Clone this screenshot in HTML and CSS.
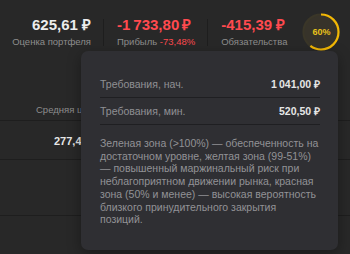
FILE: index.html
```html
<!DOCTYPE html>
<html>
<head>
  <link rel="stylesheet" href="styles.css">
</head>
<body>
  <div class="summary">
    <div class="stat stat-first">
      <div class="stat-value">625,61 ₽</div>
      <div class="stat-label">Оценка портфеля</div>
    </div>
    <div class="sep"></div>
    <div class="stat">
      <div class="stat-value neg">-1&thinsp;733,80&thinsp;₽</div>
      <div class="stat-label">Прибыль <span class="neg">-73,48%</span></div>
    </div>
    <div class="sep"></div>
    <div class="stat">
      <div class="stat-value neg">-415,39 ₽</div>
      <div class="stat-label">Обязательства</div>
    </div>
    <div class="gauge">
      <svg width="38" height="38" viewBox="0 0 38 38">
        <circle cx="19" cy="19" r="17.5" fill="#37332a" />
        <circle cx="19" cy="19" r="17.5" fill="none" stroke="#3a3628" stroke-width="2.2" />
        <circle cx="19" cy="19" r="17.5" fill="none" stroke="#f2b705" stroke-width="2.2"
          stroke-dasharray="65.97 109.96" transform="rotate(-90 19 19)" />
      </svg>
      <span class="gauge-text">60%</span>
    </div>
  </div>

  <div class="table">
    <div class="table-head">
      <div class="cell">Средняя цена</div>
    </div>
    <div class="table-row">
      <div class="cell bold">277,40 ₽</div>
    </div>
    <div class="table-row tall"></div>
  </div>

  <div class="popup">
    <div class="popup-row">
      <span>Требования, нач.</span>
      <span class="popup-value">1&thinsp;041,00 ₽</span>
    </div>
    <div class="popup-row">
      <span>Требования, мин.</span>
      <span class="popup-value">520,50 ₽</span>
    </div>
    <p class="popup-text">Зеленая зона (&gt;100%) — обеспеченность на достаточном уровне, желтая зона (99-51%) — повышенный маржинальный риск при неблагоприятном движении рынка, красная зона (50% и менее) — высокая вероятность близкого принудительного закрытия позиций.</p>
  </div>
</body>
</html>
```

FILE: styles.css
```css
body {
  margin: 0;
  background-color: #282828;
  font-family: "Liberation Sans", Arial, sans-serif;
  color: #8e8e8e;
  overflow: hidden;
}

.summary {
  display: flex;
  align-items: center;
  height: 64px;
}

.stat {
  display: flex;
  flex-direction: column;
  white-space: nowrap;
  flex-shrink: 0;
}

.stat-first {
  width: 91px;
  align-items: flex-end;
}

.stat-value {
  font-size: 15px;
  font-weight: 700;
  color: #ececec;
  line-height: 16px;
}

.stat-label {
  font-size: 9.5px;
  line-height: 12px;
  margin-top: 3px;
  color: #8d8d8d;
}

.neg {
  color: #ff4a4f;
}

.sep {
  width: 1px;
  height: 27px;
  flex-shrink: 0;
  background-color: #1e1e1e;
  margin: 0 13px 0 12px;
}

.gauge {
  position: relative;
  width: 38px;
  height: 38px;
  flex-shrink: 0;
  margin-left: 15px;
}

.gauge-text {
  position: absolute;
  top: 0;
  left: 0;
  width: 38px;
  line-height: 38px;
  text-align: center;
  font-size: 9px;
  font-weight: 700;
  color: #e8c21a;
}

.table {
  display: flex;
  flex-direction: column;
}

.table-head {
  height: 57px;
  border-bottom: 1px solid #1e1e1e;
  display: flex;
  align-items: flex-end;
  padding-bottom: 5px;
  box-sizing: border-box;
}

.table-row {
  height: 38px;
  border-bottom: 1px solid #1e1e1e;
  display: flex;
  align-items: center;
}

.table-row.tall {
  height: 55px;
}

.cell {
  padding-left: 36px;
  font-size: 9.5px;
  white-space: nowrap;
  color: #8d8d8d;
}

.cell.bold {
  padding-left: 54px;
  font-size: 11px;
  font-weight: 700;
  color: #e6e6e6;
}

.popup {
  position: absolute;
  left: 81px;
  top: 51px;
  width: 257px;
  height: 199px;
  box-sizing: border-box;
  padding: 20px 18px 0 19px;
  background-color: #2f2f33;
  border-radius: 7px;
  box-shadow: 0 4px 14px rgba(0, 0, 0, 0.35);
}

.popup-row {
  display: flex;
  justify-content: space-between;
  align-items: center;
  height: 26px;
  border-bottom: 1px solid #1f1f22;
  font-size: 10.5px;
  color: #8f8f93;
}

.popup-value {
  font-weight: 700;
  color: #e6e6e6;
}

.popup-text {
  margin: 12px 0 0;
  font-size: 10.5px;
  line-height: 12.7px;
  color: #929296;
}
```
